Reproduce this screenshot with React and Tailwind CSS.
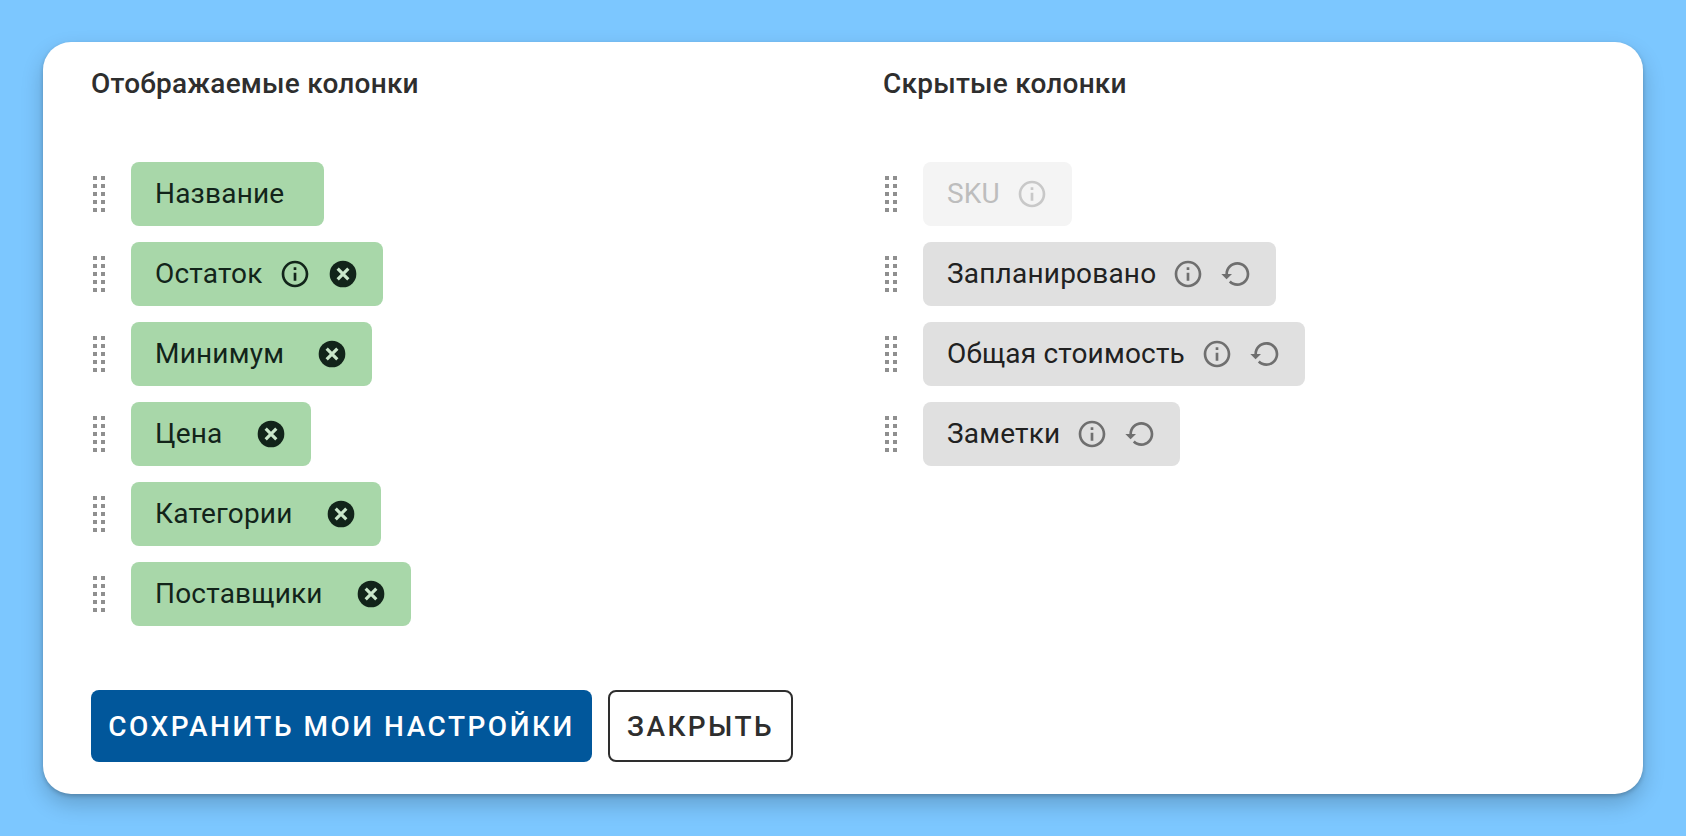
import React from 'react';

const INFO = 'M11 7h2v2h-2zm0 4h2v6h-2zm1-9C6.48 2 2 6.48 2 12s4.48 10 10 10 10-4.48 10-10S17.52 2 12 2zm0 18c-4.41 0-8-3.59-8-8s3.59-8 8-8 8 3.59 8 8-3.59 8-8 8z';
const RESTORE = 'M13 3c-4.97 0-9 4.03-9 9H1l3.89 3.89.07.14L9 12H6c0-3.87 3.13-7 7-7s7 3.13 7 7-3.13 7-7 7c-1.93 0-3.68-.79-4.94-2.06l-1.42 1.42C8.27 19.99 10.51 21 13 21c4.97 0 9-4.03 9-9s-4.03-9-9-9z';

const Icon = ({ d, className }) => (
  <svg viewBox="0 0 24 24" fill="currentColor" className={`w-8 h-8 shrink-0 ${className}`}>
    <path d={d} />
  </svg>
);

// filled circle with a heavier cross than the stock cancel glyph
const CancelIcon = () => (
  <svg viewBox="0 0 24 24" className="w-8 h-8 shrink-0">
    <circle cx="12" cy="12" r="10" fill="#12241a" />
    <path d="M8 8l8 8M16 8l-8 8" stroke="#c9e6ca" strokeWidth="2.4" />
  </svg>
);

const Grip = () => (
  <div className="grid grid-cols-[4px_4px] auto-rows-[4px] gap-1 ml-0.5 mr-[26px] shrink-0">
    {Array.from({ length: 10 }).map((_, i) => (
      <span key={i} className="bg-[#8f8f8f]" />
    ))}
  </div>
);

const shown = [
  { name: 'Название', spacer: true },
  { name: 'Остаток', info: true, cancel: true },
  { name: 'Минимум', spacer: true, cancel: true },
  { name: 'Цена', spacer: true, cancel: true },
  { name: 'Категории', spacer: true, cancel: true },
  { name: 'Поставщики', spacer: true, cancel: true },
];

const hidden = [
  { name: 'SKU', info: true, disabled: true },
  { name: 'Запланировано', info: true, restore: true },
  { name: 'Общая стоимость', info: true, restore: true },
  { name: 'Заметки', info: true, restore: true },
];

const ShownChip = ({ item }) => (
  <div className="flex items-center">
    <Grip />
    <div className="flex items-center gap-4 h-16 px-6 rounded-lg bg-[#a8d7a9] text-[#12241a]">
      <span className="text-[28px] leading-8 tracking-[0.2px]">{item.name}</span>
      {item.spacer && <span className="w-0 h-8" />}
      {item.info && <Icon d={INFO} />}
      {item.cancel && <CancelIcon />}
    </div>
  </div>
);

const HiddenChip = ({ item }) => (
  <div className="flex items-center">
    <Grip />
    <div
      className={
        item.disabled
          ? 'flex items-center gap-4 h-16 px-6 rounded-lg bg-[#f4f4f4] text-[#bdbdbd]'
          : 'flex items-center gap-4 h-16 px-6 rounded-lg bg-[#e0e0e0] text-[#212121]'
      }
    >
      <span className="text-[28px] leading-8 tracking-[0.2px]">{item.name}</span>
      {item.info && <Icon d={INFO} className={item.disabled ? 'text-[#c8c8c8]' : 'text-[#6f6f6f]'} />}
      {item.restore && <Icon d={RESTORE} className="text-[#6f6f6f]" />}
    </div>
  </div>
);

export default function App() {
  return (
    <div className="min-h-screen bg-[#7cc7ff] py-[42px] px-[43px] font-['Roboto',sans-serif]">
      <div className="bg-white rounded-[28px] pt-6 pb-8 px-12 h-[752px] shadow-[0_10px_22px_rgba(0,0,0,0.2),0_2px_4px_rgba(0,0,0,0.2)]">
        <div className="flex">
          <div className="w-[792px]">
            <h2 className="text-[28px] leading-9 font-medium text-[#2e2e2e] tracking-[0.22px] mb-[60px]">Отображаемые колонки</h2>
            <div className="flex flex-col gap-4">
              {shown.map((item) => (
                <ShownChip key={item.name} item={item} />
              ))}
            </div>
          </div>
          <div>
            <h2 className="text-[28px] leading-9 font-medium text-[#2e2e2e] tracking-[0.22px] mb-[60px]">Скрытые колонки</h2>
            <div className="flex flex-col gap-4">
              {hidden.map((item) => (
                <HiddenChip key={item.name} item={item} />
              ))}
            </div>
          </div>
        </div>
        <div className="flex gap-4 mt-16">
          <button className="h-[72px] w-[501px] pt-0.5 rounded-lg bg-[#01579b] text-white text-[28px] font-medium tracking-[2.5px] uppercase">
            Сохранить мои настройки
          </button>
          <button className="h-[72px] w-[185px] pt-0.5 rounded-lg bg-white border-2 border-[#2e2e2e] text-[#2e2e2e] text-[28px] font-medium tracking-[2.4px] uppercase">
            Закрыть
          </button>
        </div>
      </div>
    </div>
  );
}
